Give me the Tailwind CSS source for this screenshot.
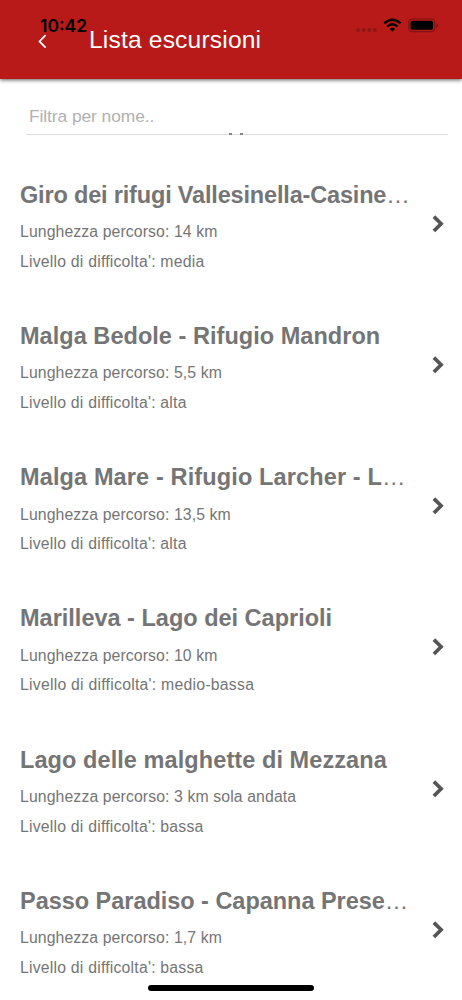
<!DOCTYPE html>
<html lang="it">
<head>
<meta charset="utf-8">
<meta name="viewport" content="width=device-width">
<title>Lista escursioni</title>
<script src="https://cdn.jsdelivr.net/npm/@tailwindcss/browser@4"></script>
</head>
<body class="relative h-[1000px] w-[462px] overflow-hidden bg-white font-['Liberation_Sans',Arial,sans-serif] text-[#757575]">
<header class="relative z-10 h-[79px] bg-[#b71a19] shadow-[0_1px_4px_rgba(0,0,0,0.65)]">
  <div class="absolute top-[15px] left-[40px] font-[Inter,sans-serif] text-[17.5px] leading-[22px] font-semibold text-black">10:42</div>
  <svg class="absolute top-[14px] left-[354px]" width="88" height="22" viewBox="0 0 88 22">
    <g fill="#8e1718"><circle cx="4" cy="16" r="2"/><circle cx="9.7" cy="16" r="2"/><circle cx="15.2" cy="16" r="2"/><circle cx="20.7" cy="16" r="2"/></g>
    <g fill="none" stroke="#000" stroke-width="2.3"><path d="M30.3 9.3Q38.4 2.2 46.5 9.3"/><path d="M33.2 12.5Q38.4 8 43.6 12.5"/></g>
    <path d="M35.7 14.8Q38.4 12.6 41.1 14.8L38.4 17.8Z"/>
    <rect x="54.8" y="5" width="26" height="12.6" rx="3.6" fill="none" stroke="#7f1213" stroke-width="1.2"/>
    <rect x="56.5" y="6.8" width="22.6" height="9" rx="2"/>
    <path d="M82.3 9.2Q84 10 84 11.3T82.3 13.4Z" fill="#7f1213"/>
  </svg>
  <div class="flex items-center pt-[25px] pl-[37px]">
    <svg class="mt-[2px]" width="12" height="16" viewBox="0 0 12 16" fill="none" stroke="#fff" stroke-width="1.7"><path d="M8.6 2.2L2.5 8.4L8.6 14.6"/></svg>
    <h1 class="ml-[40px] text-[24.6px] leading-[30px] tracking-[0.17px] whitespace-nowrap text-white">Lista escursioni</h1>
  </div>
</header>
<section class="relative ml-[26px] h-[56px] w-[422px] border-b border-[#dedede] pt-[26px] pl-[3px]">
  <div class="text-[17.4px] leading-[22px] tracking-[-0.08px] text-[#b1b1b1]">Filtra per nome..</div>
  <div class="absolute top-[54px] left-[203px] flex gap-[8px]"><i class="h-[1.5px] w-[3px] bg-[#858585]"></i><i class="h-[1.5px] w-[3px] bg-[#858585]"></i></div>
</section>
<main class="pt-[29.8px]">
  <article class="flex h-[141.2px] pt-[15px] pl-[20px]">
    <div class="w-[396px]"><h2 class="text-[23.5px] leading-[30px] font-bold tracking-[-0.17px] whitespace-nowrap">Giro dei rifugi Vallesinella-Casine<span class="font-normal">…</span></h2><div class="mt-[7.4px] text-[15.8px] leading-[29.7px] whitespace-nowrap"><p class="tracking-[0.1px]">Lunghezza percorso: 14 km</p><p class="tracking-[0.21px]">Livello di difficolta': media</p></div></div>
    <svg class="mt-[34px] ml-[15px]" width="16" height="20" viewBox="0 0 16 20" fill="none" stroke="#555" stroke-width="3.7"><path d="M2.9 2.6L10.1 9.8L2.9 17"/></svg>
  </article>
  <article class="flex h-[141.2px] pt-[15px] pl-[20px]">
    <div class="w-[396px]"><h2 class="text-[23.5px] leading-[30px] font-bold tracking-[0.04px] whitespace-nowrap">Malga Bedole - Rifugio Mandron</h2><div class="mt-[7.4px] text-[15.8px] leading-[29.7px] whitespace-nowrap"><p class="tracking-[0.1px]">Lunghezza percorso: 5,5 km</p><p class="tracking-[0.21px]">Livello di difficolta': alta</p></div></div>
    <svg class="mt-[34px] ml-[15px]" width="16" height="20" viewBox="0 0 16 20" fill="none" stroke="#555" stroke-width="3.7"><path d="M2.9 2.6L10.1 9.8L2.9 17"/></svg>
  </article>
  <article class="flex h-[141.2px] pt-[15px] pl-[20px]">
    <div class="w-[396px]"><h2 class="text-[23.5px] leading-[30px] font-bold tracking-[0.13px] whitespace-nowrap">Malga Mare - Rifugio Larcher - L<span class="font-normal">…</span></h2><div class="mt-[7.4px] text-[15.8px] leading-[29.7px] whitespace-nowrap"><p class="tracking-[0.1px]">Lunghezza percorso: 13,5 km</p><p class="tracking-[0.21px]">Livello di difficolta': alta</p></div></div>
    <svg class="mt-[34px] ml-[15px]" width="16" height="20" viewBox="0 0 16 20" fill="none" stroke="#555" stroke-width="3.7"><path d="M2.9 2.6L10.1 9.8L2.9 17"/></svg>
  </article>
  <article class="flex h-[141.2px] pt-[15px] pl-[20px]">
    <div class="w-[396px]"><h2 class="text-[23.5px] leading-[30px] font-bold whitespace-nowrap">Marilleva - Lago dei Caprioli</h2><div class="mt-[7.4px] text-[15.8px] leading-[29.7px] whitespace-nowrap"><p class="tracking-[0.1px]">Lunghezza percorso: 10 km</p><p class="tracking-[0.24px]">Livello di difficolta': medio-bassa</p></div></div>
    <svg class="mt-[34px] ml-[15px]" width="16" height="20" viewBox="0 0 16 20" fill="none" stroke="#555" stroke-width="3.7"><path d="M2.9 2.6L10.1 9.8L2.9 17"/></svg>
  </article>
  <article class="flex h-[141.2px] pt-[15px] pl-[20px]">
    <div class="w-[396px]"><h2 class="text-[23.5px] leading-[30px] font-bold tracking-[0.08px] whitespace-nowrap">Lago delle malghette di Mezzana</h2><div class="mt-[7.4px] text-[15.8px] leading-[29.7px] whitespace-nowrap"><p class="tracking-[0.11px]">Lunghezza percorso: 3 km sola andata</p><p class="tracking-[0.21px]">Livello di difficolta': bassa</p></div></div>
    <svg class="mt-[34px] ml-[15px]" width="16" height="20" viewBox="0 0 16 20" fill="none" stroke="#555" stroke-width="3.7"><path d="M2.9 2.6L10.1 9.8L2.9 17"/></svg>
  </article>
  <article class="flex h-[141.2px] pt-[15px] pl-[20px]">
    <div class="w-[396px]"><h2 class="text-[23.5px] leading-[30px] font-bold tracking-[-0.03px] whitespace-nowrap">Passo Paradiso - Capanna Prese<span class="font-normal">…</span></h2><div class="mt-[7.4px] text-[15.8px] leading-[29.7px] whitespace-nowrap"><p class="tracking-[0.1px]">Lunghezza percorso: 1,7 km</p><p class="tracking-[0.21px]">Livello di difficolta': bassa</p></div></div>
    <svg class="mt-[34px] ml-[15px]" width="16" height="20" viewBox="0 0 16 20" fill="none" stroke="#555" stroke-width="3.7"><path d="M2.9 2.6L10.1 9.8L2.9 17"/></svg>
  </article>
</main>
<div class="absolute top-[985px] left-[148px] h-[6px] w-[166px] rounded-full bg-black"></div>
</body>
</html>
